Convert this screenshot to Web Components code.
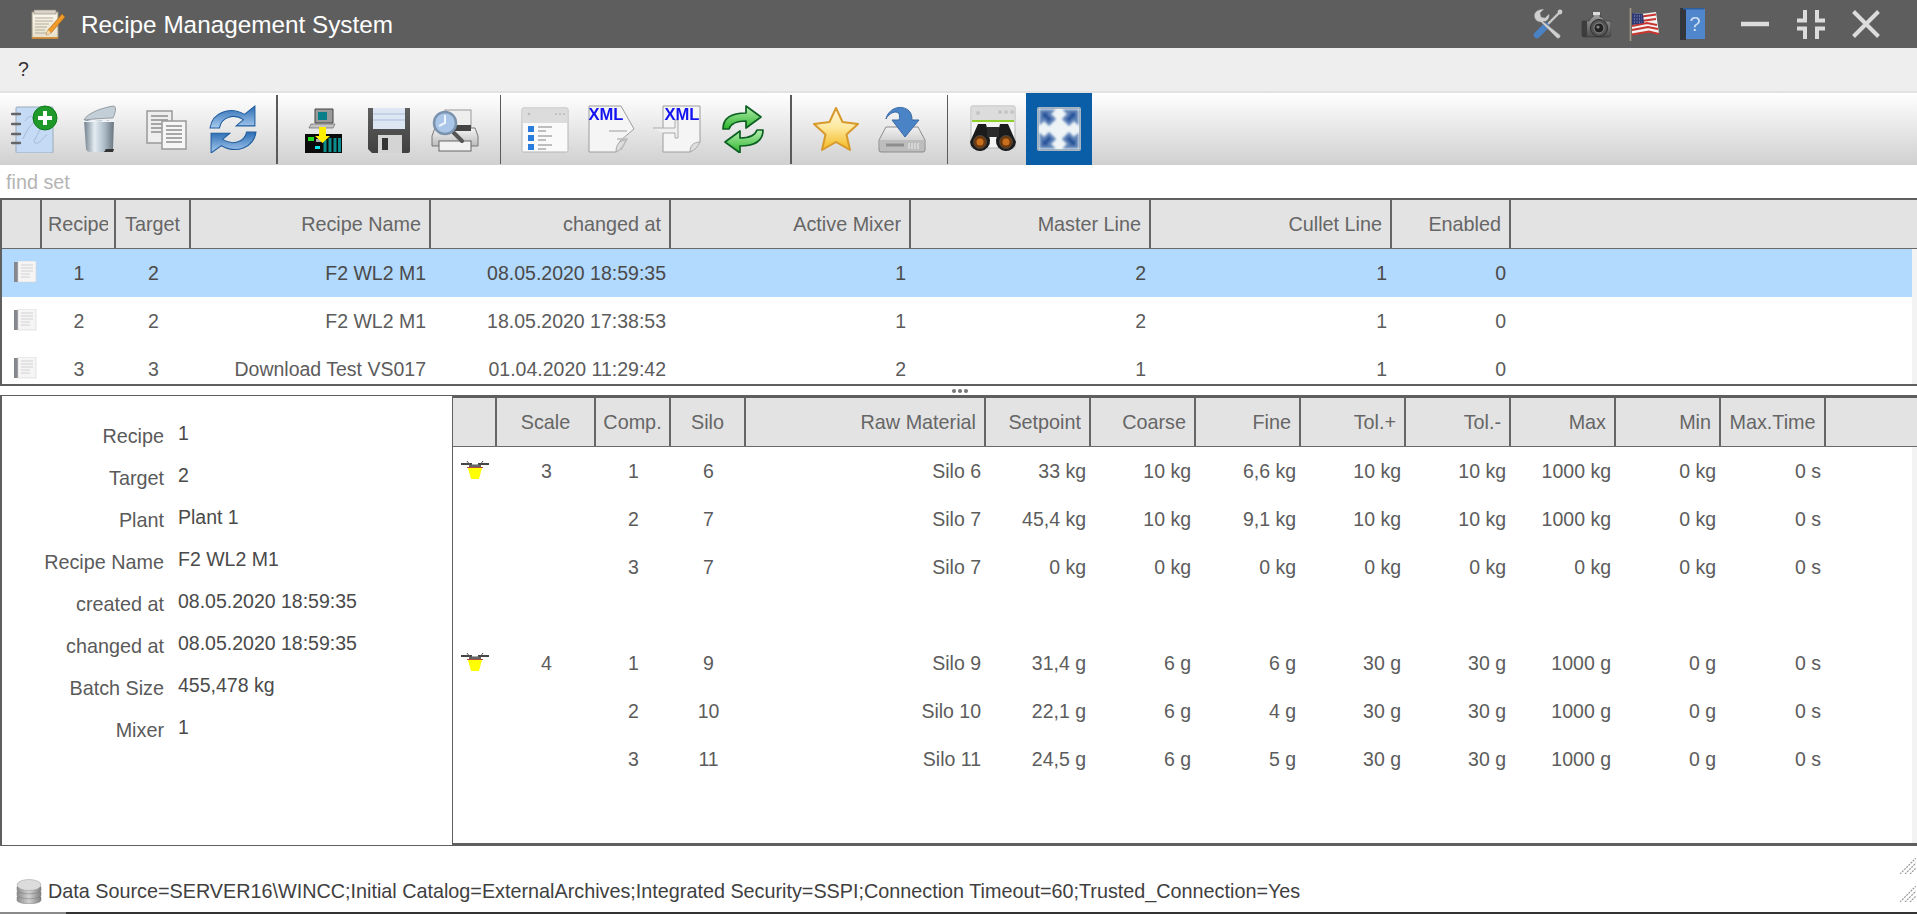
<!DOCTYPE html>
<html lang="en">
<head>
<meta charset="UTF-8">
<title>Recipe Management System</title>
<style>
  html, body { margin: 0; height: 100%; background: #fff; overflow: hidden; }
  body { font: 19.5px "Liberation Sans", Arial, sans-serif; }
</style>
</head>
<body>
<recipe-app></recipe-app>

<script>
const ICONS = {
  note: `<svg viewBox="0 0 34 30"><defs><linearGradient id="p" x2="0" y2="1"><stop offset="0" stop-color="#fbf8ee"/><stop offset="1" stop-color="#e6dfcb"/></linearGradient></defs>
    <rect x="1" y="3" width="26" height="26" fill="url(#p)" stroke="#9a927c"/><rect x="3" y="1" width="22" height="4" fill="#d8d4c8" stroke="#8b8678" stroke-width=".6"/>
    <path d="M4 9h18M4 12h18M4 15h14M4 18h12M4 21h10M4 24h14" stroke="#b2ac9a" stroke-width="1"/>
    <path d="M1 29h26" stroke="#d98c2c" stroke-width="1.6"/>
    <path d="M31 5l3 3-14 16-5 2 2-5z" fill="#f09a2a" stroke="#a8651a" stroke-width=".6"/><path d="M17 21l3 3-5 2z" fill="#f4dcb0"/></svg>`,
  wrench: `<svg viewBox="0 0 30 30"><path d="M28 2l-16 16" stroke="#c9c9c9" stroke-width="2.4"/><circle cx="27" cy="3" r="2.4" fill="#ccc"/>
    <path d="M13 17L4 26" stroke="#4a82c4" stroke-width="6.5" stroke-linecap="round"/>
    <path d="M11 0L7 4l1 4 4 1 4-4c1 4-2 8-6 7.5L27 26a2.2 2.2 0 0 1-3 3L8 13C3 13 0 8 2 4 4 1 8 0 11 0z" fill="#cfcfcf" stroke="#8a8a8a" stroke-width=".5"/></svg>`,
  camera: `<svg viewBox="0 0 30 27"><defs><linearGradient id="c" x2="0" y2="1"><stop offset="0" stop-color="#a6a6a6"/><stop offset="1" stop-color="#4c4c4c"/></linearGradient></defs>
    <path d="M1 10h7l3-4h1V2h7v4h2l3 4h4a2 2 0 0 1 2 2v11a3 3 0 0 1-3 3H3a2 2 0 0 1-2-2z" fill="url(#c)" stroke="#333" stroke-width=".6"/><rect x="1" y="10" width="5" height="16" fill="#3d3d3d"/><rect x="12" y="1" width="7" height="3" fill="#ddd"/>
    <circle cx="18" cy="17" r="8.5" fill="#555" stroke="#2c2c2c"/><circle cx="18" cy="17" r="5" fill="#222" stroke="#8a8a8a"/><circle cx="17" cy="16" r="1.6" fill="#888"/></svg>`,
  flag: `<svg viewBox="0 0 31 33"><path d="M1.5 0v33" stroke="#a89a86" stroke-width="1.6"/>
    <path d="M3 5l9 1 15-2 3 22-10-2-17 3z" fill="#f3f3f3"/>
    <path d="M3 26.5l17-3 10 2.5M3 22l16-3 10 2M3 18l15-3 10 2M12 13l15-2M13 8.500l14-2" stroke="#c8352e" stroke-width="2" fill="none"/>
    <path d="M3 5l11 1 1 9-12 2z" fill="#2f3a74"/><path d="M5 8h8M5 11h8M5 14h8" stroke="#9aa3cc" stroke-width="1" stroke-dasharray="1 1.5"/></svg>`,
  book: `<svg viewBox="0 0 25 32"><rect x="5" y="1" width="20" height="30" fill="#4f86cc"/><rect x="0" y="0" width="6" height="32" fill="#33363a"/><rect x="3" y="0" width="21" height="1.500" fill="#2b5f9e"/>
    <text x="15" y="23" font-family="Liberation Sans" font-size="20" fill="#cfe0f5" text-anchor="middle">?</text></svg>`,

  newrec: `<svg viewBox="0 0 48 48"><rect x="5" y="2" width="37" height="46" rx="1" fill="#c5daf4" stroke="#9aaab9"/><path d="M12 34c6-14 12-20 16-14s-8 16-4 18 8-6 12-8M14 16c4-6 8-6 8-2" stroke="#a6bcd6" fill="none"/>
    <path d="M1 9h8M1 19h8M1 29h8M1 38h8" stroke="#666" stroke-width="2.400" stroke-linecap="round"/>
    <circle cx="34" cy="13" r="12" fill="#1f9a2a" stroke="#0f7a1c"/><path d="M34 6v14M27 13h14" stroke="#fff" stroke-width="4"/></svg>`,
  trash: `<svg viewBox="0 0 48 48"><defs><linearGradient id="t"><stop offset="0" stop-color="#6f7f8c"/><stop offset=".35" stop-color="#e4ecf2"/><stop offset=".7" stop-color="#a9b8c4"/><stop offset="1" stop-color="#67747e"/></linearGradient></defs>
    <path d="M7 15h30l-1 29q-1 3-4 3H13q-3 0-4-3z" fill="url(#t)"/><path d="M27 47h9l1-3h-8z" fill="#333"/>
    <path d="M7 15c3-7 20-13 30-14 3 1 1 8-1 12-8 0-20 1-29 2z" fill="#c4ced6" stroke="#77838d" stroke-width=".7"/>
    <path d="M7 15c6 3 6-2 12 1s6-3 10-1 4-2 8-1v3H7z" fill="#f0f3f6"/></svg>`,
  copy: `<svg viewBox="0 0 48 48"><rect x="4" y="6" width="25" height="32" fill="#eee" stroke="#999" stroke-width="1.500"/><path d="M8 11h17M8 15h17M8 19h17M8 23h17M8 27h10" stroke="#8d8d8d" stroke-width="1.400"/>
    <rect x="19" y="16" width="24" height="28" fill="#f6f6f6" stroke="#999" stroke-width="1.500"/><path d="M23 21h16M23 25h16M23 29h16M23 33h16M23 37h16" stroke="#8d8d8d" stroke-width="1.400"/></svg>`,
  refresh: `<svg viewBox="1 1 46 46"><defs><linearGradient id="r" x2="0" y2="1"><stop offset="0" stop-color="#2b6cb4"/><stop offset="1" stop-color="#a9cbee"/></linearGradient></defs>
    <g fill="url(#r)" stroke="#1e5c9f" stroke-width="1"><path d="M2 23C4 8 21 2 35 10l10-8v19H27l7-6C25 9 13 12 11 23z"/><path d="M46 27c-2 15-19 21-33 13L3 47V28h18l-7 6c9 6 21 3 23-7z"/></g></svg>`,

  download: `<svg viewBox="0 0 48 48"><rect x="6" y="29" width="37" height="20" fill="#0b0b0b"/><rect x="9" y="32" width="6" height="4" fill="#22dd22"/><rect x="17" y="34" width="8" height="3" fill="#aaa"/><rect x="16" y="41" width="5" height="3" fill="#11e6e6"/>
    <path d="M26 35v12M31 33v14M36 33v14M40.500 33v14" stroke="#0c8d8d" stroke-width="3"/>
    <path d="M16 4h18v14H16z" fill="#9a9a9a" stroke="#444"/><rect x="19" y="7" width="9" height="8" fill="#0a7f8a"/><path d="M12 19h24l-2 4H10z" fill="#c4c4c4" stroke="#555" stroke-width=".6"/>
    <path d="M20 22h7v9h4l-7.500 7-7.500-7h4z" fill="#ffee00"/></svg>`,
  save: `<svg viewBox="0 0 48 48"><defs><linearGradient id="s" x2="0" y2="1"><stop offset="0" stop-color="#5f5f5f"/><stop offset="1" stop-color="#404040"/></linearGradient></defs>
    <path d="M3 3h42v43q0 2-2 2H7l-4-4z" fill="url(#s)"/><rect x="8" y="3" width="32" height="21" fill="#dde7f4"/><path d="M8 9h32M8 15h32" stroke="#a9bdd8"/>
    <rect x="13" y="30" width="24" height="18" fill="#d4d4d4"/><rect x="17" y="33" width="6" height="12" fill="#333"/></svg>`,
  print: `<svg viewBox="0 0 48 48"><defs><linearGradient id="g" x2="0" y2="1"><stop offset="0" stop-color="#f4f4f4"/><stop offset="1" stop-color="#bbb"/></linearGradient></defs>
    <rect x="14" y="5" width="26" height="18" fill="#eee" stroke="#999"/><path d="M4 23h40l3 8v10H1V31z" fill="url(#g)" stroke="#777"/><rect x="18" y="20" width="22" height="6" fill="#444"/>
    <rect x="8" y="36" width="32" height="10" fill="#f2f2f2" stroke="#666"/><path d="M21 26l10 10" stroke="#555" stroke-width="4" stroke-linecap="round"/>
    <circle cx="14" cy="18" r="11" fill="#a9c6e8" stroke="#7c93ad" stroke-width="2.500"/><path d="M14 10v8l-6 3" stroke="#eef4fb" stroke-width="2" fill="none"/></svg>`,
  list: `<svg viewBox="0 0 48 48"><rect x="1" y="3" width="46" height="44" rx="1.500" fill="#fafafa" stroke="#b5b5b5"/><rect x="2" y="4" width="44" height="14" fill="#dcdcdc"/><circle cx="8" cy="9" r="1.300" fill="#bbb"/><path d="M34 9h10" stroke="#aaa" stroke-dasharray="2 2"/>
    <g fill="#2a7ddc"><rect x="7" y="21" width="6" height="6"/><rect x="7" y="30" width="6" height="6"/><rect x="7" y="39" width="6" height="6"/></g>
    <path d="M17 22h14M17 26h8M17 31h14M17 35h8M17 40h14M17 44h8" stroke="#aaa" stroke-width="1.300"/></svg>`,
  xmlout: `<svg viewBox="0 0 48 48"><path d="M2 1h32l13 23-13 11-2 3-3 9H2z" fill="#f5f5f5" stroke="#9c9c9c"/><path d="M29 47c0-9 5-12 10-12-2 5-5 10-10 12z" fill="#ddd" stroke="#aaa"/>
    <text x="19" y="15" font-family="Liberation Sans" font-weight="bold" font-size="17" fill="#1414f0" text-anchor="middle" textLength="35" lengthAdjust="spacingAndGlyphs">XML</text>
    <path d="M22 26h18M30 34h10l-6 11" stroke="#bbb" stroke-width="1.500" fill="none"/></svg>`,
  xmlin: `<svg viewBox="0 0 48 48"><path d="M10 1h37v36l-10 10H10z" fill="#f5f5f5" stroke="#9c9c9c"/><path d="M37 47c0-6 3-10 10-10-2 5-5 8-10 10z" fill="#ddd" stroke="#aaa"/>
    <path d="M0 23h22v-8h3v18h-3v-5H10" fill="#f0f0f0" stroke="#aaa"/>
    <text x="29" y="15" font-family="Liberation Sans" font-weight="bold" font-size="17" fill="#1414f0" text-anchor="middle" textLength="35" lengthAdjust="spacingAndGlyphs">XML</text></svg>`,
  sync: `<svg viewBox="0 0 48 48"><defs><linearGradient id="y" x2="0" y2="1"><stop offset="0" stop-color="#b6efb0"/><stop offset="1" stop-color="#2cb52c"/></linearGradient></defs>
    <g fill="url(#y)" stroke="#0c5f22" stroke-width="1.700" stroke-linejoin="round"><path d="M4 24C4 13 12 8 27 8V1l15 11-15 11v-7c-9 0-15 2-17 8z"/><path d="M44 25c0 11-8 16-23 16v7L6 37l15-11v7c9 0 15-2 17-8z"/></g></svg>`,
  star: `<svg viewBox="0 0 48 48"><defs><linearGradient id="a" x2="0" y2="1"><stop offset="0" stop-color="#fff6e2"/><stop offset=".45" stop-color="#fde9a0"/><stop offset="1" stop-color="#f2b81c"/></linearGradient></defs>
    <path d="M24 3l6.500 14 15.500 2-11.500 10.500 3.500 15.500-14-8-14 8 3.500-15.500L2 19l15.500-2z" fill="url(#a)" stroke="#d8992c" stroke-width="2" stroke-linejoin="round"/></svg>`,
  drive: `<svg viewBox="0 0 48 48"><defs><linearGradient id="d" x2="0" y2="1"><stop offset="0" stop-color="#f1f1f1"/><stop offset="1" stop-color="#b9b9b9"/></linearGradient></defs>
    <path d="M8 22h32l7 13v10q0 2-2 2H3q-2 0-2-2V35z" fill="url(#d)" stroke="#8c8c8c"/><path d="M2 35h44v11H2z" fill="#bdbdbd"/><path d="M8 40h18" stroke="#8e8e8e" stroke-width="3"/><path d="M31 38v6M34 38v6M37 38v6M40 38v6" stroke="#eee"/>
    <path d="M8 14C10 4 22-1 30 5c3 2 4 6 4 10h7L27 32 14 15h7c1-4 1-7-3-8-4 0-8 3-10 7z" fill="#4a84c6" stroke="#3a6aa4"/></svg>`,
  binoc: `<svg viewBox="0 0 48 48"><rect x="2" y="1" width="44" height="42" rx="1.500" fill="#f4f4f4" stroke="#b5b5b5"/><rect x="3" y="2" width="42" height="14" fill="#dcdcdc"/><rect x="3" y="15" width="42" height="2" fill="#8fd12a"/>
    <circle cx="9" cy="8" r="2" fill="#c4c4c4"/><circle cx="31" cy="7" r="2" fill="#c4c4c4"/><circle cx="37" cy="7" r="2" fill="#c4c4c4"/><circle cx="43" cy="7" r="2" fill="#c4c4c4"/>
    <path d="M9 19h8l4 16a10 10 0 0 1-20 2z" fill="#1b1b1b"/><path d="M39 19h-8l-4 16a10 10 0 0 0 20 2z" fill="#1b1b1b"/><rect x="18" y="22" width="12" height="10" fill="#2a2a2a"/>
    <circle cx="11" cy="37" r="6.500" fill="#6e3a0e" stroke="#444"/><circle cx="37" cy="37" r="6.500" fill="#6e3a0e" stroke="#444"/><circle cx="11" cy="37" r="3.500" fill="#c9701e"/><circle cx="37" cy="37" r="3.500" fill="#c9701e"/></svg>`,
  fit: `<svg viewBox="0 0 44 44"><defs><filter id="f" x="-20%" y="-20%" width="140%" height="140%"><feGaussianBlur stdDeviation=".9"/></filter></defs>
    <rect x="1" y="1" width="42" height="42" rx="1" fill="#eef4f6" stroke="#a9b8c4" stroke-width="2"/>
    <g fill="#27549a" stroke="#5f83b8" stroke-width="3" filter="url(#f)"><path d="M4 4h11l-3 3 5 5-5 5-5-5-3 3z"/><path d="M40 4H29l3 3-5 5 5 5 5-5 3 3z"/><path d="M4 40h11l-3-3 5-5-5-5-5 5-3-3z"/><path d="M40 40H29l3-3-5-5 5-5 5 5 3-3z"/></g></svg>`,

  page: `<svg viewBox="0 0 24 22"><rect x="1" y="1" width="6" height="20" fill="#84878b"/><rect x="5" y="0" width="18" height="21" fill="#f5f5f5" stroke="#d4d4d4" stroke-width=".6"/><path d="M8 4h12M8 7h12M8 10h12M8 13h9M8 16h9" stroke="#d0d0d0"/></svg>`,
  hopper: `<svg viewBox="0 0 28 18"><path d="M0 3h11M17 3h11" stroke="#444" stroke-width="2"/><path d="M6 0l3 4h10l3-4" stroke="#555" fill="none"/><path d="M8 4h12v2H8z" fill="#666"/><path d="M6 6h16v1H6z" fill="#b04a3a"/><path d="M7 7h14l-3 11h-8z" fill="#ffff00"/></svg>`,
  db: `<svg viewBox="0 0 26 25"><defs><linearGradient id="b" x2="1"><stop offset="0" stop-color="#8c8c8c"/><stop offset=".5" stop-color="#d2d2d2"/><stop offset="1" stop-color="#808080"/></linearGradient></defs>
    <g fill="url(#b)" stroke="#777" stroke-width=".5"><path d="M1 18c0-2 24-2 24 0v3c0 5-24 5-24 0z"/><path d="M1 13c0-2 24-2 24 0v3c0 5-24 5-24 0z"/><path d="M1 8c0-2 24-2 24 0v3c0 5-24 5-24 0z"/></g><ellipse cx="13" cy="6" rx="12" ry="5.500" fill="#dcdcdc" stroke="#999" stroke-width=".5"/></svg>`
};

class AppIcon extends HTMLElement {
  constructor() {
    super();
    this.attachShadow({ mode: 'open' });
  }
  connectedCallback() {
    const w = this.getAttribute('w') || 48;
    const h = this.getAttribute('h') || w;
    this.shadowRoot.innerHTML = `<style>
      :host { display: block; width: ${w}px; height: ${h}px; flex: none; }
      svg { display: block; width: 100%; height: 100%; filter: blur(.35px); }
    </style>${ICONS[this.getAttribute('name')]}`;
  }
}
customElements.define('app-icon', AppIcon);

class TitleBar extends HTMLElement {
  constructor() {
    super();
    this.attachShadow({ mode: 'open' }).innerHTML = `<style>
      :host { display: flex; align-items: center; height: 48px; background: #5e5e5e; color: #fff; font-size: 24.3px; flex: none; }
      .logo { margin: 0 16px 0 31px; }
      .title { flex: 1; padding-top: 2px; }
      .tools { display: flex; align-items: center; }
      .ctl { stroke: #dcdcdc; fill: none; display: block; }
    </style>
    <app-icon class="logo" name="note" w="34" h="30"></app-icon>
    <span class="title">Recipe Management System</span>
    <div class="tools">
      <app-icon name="wrench" w="30" style="margin-right:18px"></app-icon>
      <app-icon name="camera" w="30" h="27" style="margin-right:18px"></app-icon>
      <app-icon name="flag" w="31" h="33" style="margin-right:20px"></app-icon>
      <app-icon name="book" w="25" h="32" style="margin-right:36px"></app-icon>
      <svg class="ctl" width="28" height="28" style="margin-right:28px"><path d="M0 14h28" stroke-width="4.500"/></svg>
      <svg class="ctl" width="28" height="29" style="margin-right:27px"><path d="M8 0v10.500H0M20 0v10.500h8M8 29V18.500H0M20 29V18.500h8" stroke-width="4"/></svg>
      <svg class="ctl" width="28" height="28" style="margin-right:37px"><path d="M1.500 1.500l25 25M26.500 1.500l-25 25" stroke-width="4"/></svg>
    </div>`;
  }
}
customElements.define('title-bar', TitleBar);

class MenuBar extends HTMLElement {
  constructor() {
    super();
    this.attachShadow({ mode: 'open' }).innerHTML = `<style>
      :host { display: flex; align-items: center; height: 43px; padding-left: 18px; background: #eee; border-bottom: 2px solid #e2e2e2; color: #333; font-size: 19.5px; flex: none; }
    </style><slot></slot>`;
  }
}
customElements.define('menu-bar', MenuBar);

class ToolBar extends HTMLElement {
  constructor() {
    super();
    this.attachShadow({ mode: 'open' }).innerHTML = `<style>
      :host { display: flex; height: 72px; padding-left: 2px; background: linear-gradient(#fff, #d0d0d0); flex: none; }
    </style><slot></slot>`;
  }
}
customElements.define('tool-bar', ToolBar);

class ToolButton extends HTMLElement {
  constructor() {
    super();
    this.attachShadow({ mode: 'open' });
  }
  connectedCallback() {
    const active = this.hasAttribute('active');
    const size = this.getAttribute('size') || 48;
    this.shadowRoot.innerHTML = `<style>
      :host { display: flex; align-items: center; justify-content: center; width: 66px; height: 72px; flex: none; ${active ? 'background:#0a5ea8;' : ''} }
    </style><app-icon name="${this.getAttribute('icon')}" w="${size}"></app-icon>`;
  }
}
customElements.define('tool-button', ToolButton);

class ToolSep extends HTMLElement {
  constructor() {
    super();
    this.attachShadow({ mode: 'open' });
  }
  connectedCallback() {
    const w = this.getAttribute('w') || 2;
    const ml = this.getAttribute('ml') || 10;
    const mr = this.getAttribute('mr') || 12;
    this.shadowRoot.innerHTML = `<style>
      :host { display: block; width: ${w}px; margin: 2px ${mr}px 1px ${ml}px; background: #5a5a5a; flex: none; }
    </style>`;
  }
}
customElements.define('tool-sep', ToolSep);

class SearchBox extends HTMLElement {
  constructor() {
    super();
    this.attachShadow({ mode: 'open' }).innerHTML = `<style>
      :host { display: flex; align-items: center; height: 33px; padding: 1px 0 0 6px; box-sizing: border-box; color: #b4b4b4; font-size: 19.8px; flex: none; }
    </style><span>find set</span>`;
  }
}
customElements.define('search-box', SearchBox);

// columns: [width, header, data align, header align]
class DataGrid extends HTMLElement {
  constructor() {
    super();
    this.attachShadow({ mode: 'open' });
  }
  setData(cols, rows, selected) {
    const tpl = cols.map(c => c[0] + 'px').join(' ') + ' 1fr';
    const head = cols.map(c => `<div class="hc ${c[3] || c[2]}"><span>${c[1]}</span></div>`).join('') + '<div class="hfill"></div>';
    const body = rows.map((r, i) => {
      const cells = cols.map((c, j) => {
        const v = r[j] || '';
        const inner = j === 0 && v ? `<app-icon class="${v}" name="${v}" ${v === 'page' ? 'w="24" h="22"' : 'w="28" h="18"'}></app-icon>` : v;
        return `<div class="c ${c[2]} ${j === 0 ? 'first' : ''}">${inner}</div>`;
      }).join('');
      return `<div class="row ${i === selected ? 'sel' : ''}">${cells}<div></div></div>`;
    }).join('');
    this.shadowRoot.innerHTML = `<style>
      :host { display: flex; flex-direction: column; min-height: 0; min-width: 0; box-sizing: border-box; color: #5c5c5c; font-size: 19.5px; border: 0 solid #5f5f5f; border-width: var(--bt, 2px) 0 var(--bb, 2px) var(--bl, 2px); }
      .head, .row { display: grid; grid-template-columns: ${tpl}; }
      .head { flex: none; height: var(--hh, 48px); background: #e3e3e3; border-bottom: 1px solid #6a6a6a; color: #666; box-sizing: content-box; font-size: 19.8px; }
      .hc { display: flex; align-items: center; box-sizing: border-box; border-right: 2px solid #666; padding: 0 var(--hp, 8px); min-width: 0; }
      .hc span { display: block; overflow: hidden; white-space: nowrap; }
      .hc.right { justify-content: flex-end; padding: 0 8px; }
      .hc.center { justify-content: center; }
      .hc.center span { min-width: 0; }
      .body { flex: 1; min-height: 0; overflow: hidden; box-sizing: border-box; background: linear-gradient(to left, #f3f3f3 5px, #fff 5px); }
      .row { height: 48px; }
      .row.sel { background: linear-gradient(to left, #f3f3f3 5px, #b2d9fe 5px); color: #4a4a4a; }
      .c { display: flex; align-items: center; min-width: 0; white-space: nowrap; padding: 0 5px; box-sizing: border-box; }
      .c.right { justify-content: flex-end; }
      .c.center { justify-content: center; }
      .c.first { padding: 0; justify-content: flex-start; }
      .page { margin: -2px 0 0 11px; }
      .hopper { margin: -2px 0 0 8px; }
    </style><div class="head">${head}</div><div class="body">${body}</div>`;
  }
}
customElements.define('data-grid', DataGrid);

class RecipeForm extends HTMLElement {
  constructor() {
    super();
    this.attachShadow({ mode: 'open' });
  }
  setData(items) {
    this.shadowRoot.innerHTML = `<style>
      :host { display: grid; grid-template-columns: 162px 1fr; grid-auto-rows: 42px; column-gap: 14px; align-content: start; box-sizing: border-box; width: 452px; flex: none; padding-top: 18px; border: 0 solid #5f5f5f; border-width: 1px 0 1px 2px; font-size: 19.5px; }
      .l { display: flex; align-items: center; justify-content: flex-end; padding-top: 3px; color: #5a5a5a; font-size: 19.8px; }
      .v { display: flex; align-items: center; padding-bottom: 4px; color: #4a4a4a; }
    </style>` + items.map(i => `<div class="l">${i[0]}</div><div class="v">${i[1]}</div>`).join('');
  }
}
customElements.define('recipe-form', RecipeForm);

class SplitHandle extends HTMLElement {
  constructor() {
    super();
    this.attachShadow({ mode: 'open' }).innerHTML = `<style>
      :host { display: flex; align-items: center; justify-content: center; gap: 2px; height: 9px; flex: none; padding-left: 2px; }
      i { width: 4px; height: 4px; border-radius: 50%; background: #777; }
    </style><i></i><i></i><i></i>`;
  }
}
customElements.define('split-handle', SplitHandle);

class StatusBar extends HTMLElement {
  constructor() {
    super();
    const grip = `<svg class="grip" width="16" height="16"><path d="M0 16L16 0M5 16L16 5M10 16l6-6" stroke="#999" stroke-width="1.200" stroke-dasharray="2 1"/></svg>`;
    this.attachShadow({ mode: 'open' }).innerHTML = `<style>
      :host { display: flex; flex-direction: column; flex: 1; min-height: 0; color: #404040; font-size: 19.8px; }
      .top { display: flex; justify-content: flex-end; align-items: flex-start; height: 12px; padding-top: 12px; flex: none; }
      .line { flex: 1; display: flex; align-items: center; padding-left: 16px; }
      .txt { flex: 1; margin-left: 6px; white-space: nowrap; }
      .grip { flex: none; margin-right: 1px; }
      .top .grip { margin-bottom: -4px; }
      .line .grip { margin-top: 5px; }
      .foot { height: 2px; flex: none; background: linear-gradient(to right, #8a8a8a 66px, #333 66px); }
    </style>
    <div class="top">${grip}</div>
    <div class="line"><app-icon name="db" w="26" h="25"></app-icon><span class="txt"><slot></slot></span>${grip}</div>
    <div class="foot"></div>`;
  }
}
customElements.define('status-bar', StatusBar);

class RecipeApp extends HTMLElement {
  constructor() {
    super();
    this.attachShadow({ mode: 'open' }).innerHTML = `<style>
      :host { display: flex; flex-direction: column; width: 1917px; height: 914px; overflow: hidden; font-family: "Liberation Sans", Arial, sans-serif; }
      #top { height: 188px; flex: none; --hp: 6px; }
      .lower { display: flex; height: 451px; flex: none; }
      #bottom { flex: 1; --bt: 3px; --bb: 3px; --bl: 1px; --hh: 48px; --hp: 4px; }
    </style>
    <title-bar></title-bar>
    <menu-bar>?</menu-bar>
    <tool-bar>
      <tool-button icon="newrec"></tool-button><tool-button icon="trash"></tool-button><tool-button icon="copy"></tool-button><tool-button icon="refresh"></tool-button>
      <tool-sep ml="10" mr="12"></tool-sep>
      <tool-button icon="download"></tool-button><tool-button icon="save"></tool-button><tool-button icon="print"></tool-button>
      <tool-sep w="1" ml="12" mr="11"></tool-sep>
      <tool-button icon="list"></tool-button><tool-button icon="xmlout"></tool-button><tool-button icon="xmlin"></tool-button><tool-button icon="sync"></tool-button>
      <tool-sep ml="14" mr="11"></tool-sep>
      <tool-button icon="star"></tool-button><tool-button icon="drive"></tool-button>
      <tool-sep w="1" ml="12" mr="12"></tool-sep>
      <tool-button icon="binoc"></tool-button><tool-button icon="fit" size="44" active></tool-button>
    </tool-bar>
    <search-box></search-box>
    <data-grid id="top"></data-grid>
    <split-handle></split-handle>
    <div class="lower">
      <recipe-form id="form"></recipe-form>
      <data-grid id="bottom"></data-grid>
    </div>
    <status-bar>Data Source=SERVER16\\WINCC;Initial Catalog=ExternalArchives;Integrated Security=SSPI;Connection Timeout=60;Trusted_Connection=Yes</status-bar>`;

    const $ = id => this.shadowRoot.getElementById(id);

    $('top').setData([
      [40, '', 'center'], [74, 'Recipe', 'center'], [75, 'Target', 'center'],
      [240, 'Recipe Name', 'right'], [240, 'changed at', 'right'], [240, 'Active Mixer', 'right'],
      [240, 'Master Line', 'right'], [241, 'Cullet Line', 'right'], [119, 'Enabled', 'right']
    ], [
      ['page', '1', '2', 'F2 WL2 M1', '08.05.2020 18:59:35', '1', '2', '1', '0'],
      ['page', '2', '2', 'F2 WL2 M1', '18.05.2020 17:38:53', '1', '2', '1', '0'],
      ['page', '3', '3', 'Download Test VS017', '01.04.2020 11:29:42', '2', '1', '1', '0']
    ], 0);

    $('form').setData([
      ['Recipe', '1'], ['Target', '2'], ['Plant', 'Plant 1'], ['Recipe Name', 'F2 WL2 M1'],
      ['created at', '08.05.2020 18:59:35'], ['changed at', '08.05.2020 18:59:35'],
      ['Batch Size', '455,478 kg'], ['Mixer', '1']
    ]);

    $('bottom').setData([
      [44, '', 'center'], [99, 'Scale', 'center'], [75, 'Comp.', 'center'], [75, 'Silo', 'center'],
      [240, 'Raw Material', 'right'], [105, 'Setpoint', 'right'], [105, 'Coarse', 'right'], [105, 'Fine', 'right'],
      [105, 'Tol.+', 'right'], [105, 'Tol.-', 'right'], [105, 'Max', 'right'], [105, 'Min', 'right'],
      [105, 'Max.Time', 'right', 'center']
    ], [
      ['hopper', '3', '1', '6', 'Silo 6', '33 kg', '10 kg', '6,6 kg', '10 kg', '10 kg', '1000 kg', '0 kg', '0 s'],
      ['', '', '2', '7', 'Silo 7', '45,4 kg', '10 kg', '9,1 kg', '10 kg', '10 kg', '1000 kg', '0 kg', '0 s'],
      ['', '', '3', '7', 'Silo 7', '0 kg', '0 kg', '0 kg', '0 kg', '0 kg', '0 kg', '0 kg', '0 s'],
      [],
      ['hopper', '4', '1', '9', 'Silo 9', '31,4 g', '6 g', '6 g', '30 g', '30 g', '1000 g', '0 g', '0 s'],
      ['', '', '2', '10', 'Silo 10', '22,1 g', '6 g', '4 g', '30 g', '30 g', '1000 g', '0 g', '0 s'],
      ['', '', '3', '11', 'Silo 11', '24,5 g', '6 g', '5 g', '30 g', '30 g', '1000 g', '0 g', '0 s']
    ], -1);
  }
}
customElements.define('recipe-app', RecipeApp);
</script>
</body>
</html>
